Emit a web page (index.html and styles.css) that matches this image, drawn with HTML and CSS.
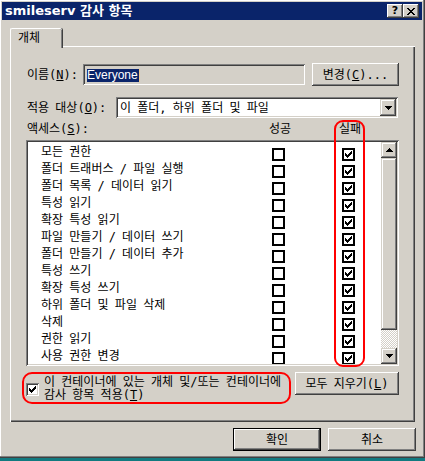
FILE: index.html
```html
<!DOCTYPE html>
<html lang="ko">
<head>
<meta charset="utf-8">
<title>smileserv 감사 항목</title>
<link rel="stylesheet" href="styles.css">
</head>
<body>
<svg class="defs" width="0" height="0" aria-hidden="true">
  <symbol id="chk" viewBox="0 0 7 7"><path d="M6 0h1v1h-1z M5 1h2v1h-2z M0 2h1v1h-1z M4 2h3v1h-3z M0 3h2v1h-2z M3 3h3v1h-3z M0 4h5v1h-5z M1 5h3v1h-3z M2 6h1v1h-1z" fill="#000"/></symbol>
</svg>
<div class="window">
  <div class="titlebar">
    <span class="title">smileserv 감사 항목</span>
    <div class="tbtns">
      <span class="tbtn tq">?</span>
      <span class="tbtn"><svg width="8" height="7" viewBox="0 0 8 7" shape-rendering="crispEdges"><path d="M0 0h2v1h-2z M6 0h2v1h-2z M1 1h2v1h-2z M5 1h2v1h-2z M2 2h4v1h-4z M3 3h2v1h-2z M2 4h4v1h-4z M1 5h2v1h-2z M5 5h2v1h-2z M0 6h2v1h-2z M6 6h2v1h-2z" fill="#000"/></svg></span>
    </div>
  </div>
  <div class="body">
    <div class="tabs"><div class="tab">개체</div></div>
    <div class="panel">
      <div class="row r-name">
        <span class="lbl w-name">이름(<u>N</u>):</span>
        <div class="field"><span class="sel">Everyone</span><span class="caret"></span></div>
        <button class="btn btn-change">변경(<u>C</u>)...</button>
      </div>
      <div class="row r-apply">
        <span class="lbl w-apply">적용 대상(<u>O</u>):</span>
        <div class="combo">
          <span class="combo-text">이 폴더, 하위 폴더 및 파일</span>
          <span class="combo-btn"><svg width="7" height="4" viewBox="0 0 7 4" shape-rendering="crispEdges"><path d="M0 0h7v1h-7z M1 1h5v1h-5z M2 2h3v1h-3z M3 3h1v1h-1z" fill="#000"/></svg></span>
        </div>
      </div>
      <div class="hdr">
        <span>액세스(<u>S</u>):</span><span>성공</span><span>실패</span>
      </div>
      <div class="list">
        <div class="rows">
          <div class="lrow"><span class="name">모든 권한</span><span class="lcb"></span><span class="lcb fail"><svg><use href="#chk"/></svg></span></div>
          <div class="lrow"><span class="name">폴더 트래버스 / 파일 실행</span><span class="lcb"></span><span class="lcb fail"><svg><use href="#chk"/></svg></span></div>
          <div class="lrow"><span class="name">폴더 목록 / 데이터 읽기</span><span class="lcb"></span><span class="lcb fail"><svg><use href="#chk"/></svg></span></div>
          <div class="lrow"><span class="name">특성 읽기</span><span class="lcb"></span><span class="lcb fail"><svg><use href="#chk"/></svg></span></div>
          <div class="lrow"><span class="name">확장 특성 읽기</span><span class="lcb"></span><span class="lcb fail"><svg><use href="#chk"/></svg></span></div>
          <div class="lrow"><span class="name">파일 만들기 / 데이터 쓰기</span><span class="lcb"></span><span class="lcb fail"><svg><use href="#chk"/></svg></span></div>
          <div class="lrow"><span class="name">폴더 만들기 / 데이터 추가</span><span class="lcb"></span><span class="lcb fail"><svg><use href="#chk"/></svg></span></div>
          <div class="lrow"><span class="name">특성 쓰기</span><span class="lcb"></span><span class="lcb fail"><svg><use href="#chk"/></svg></span></div>
          <div class="lrow"><span class="name">확장 특성 쓰기</span><span class="lcb"></span><span class="lcb fail"><svg><use href="#chk"/></svg></span></div>
          <div class="lrow"><span class="name">하위 폴더 및 파일 삭제</span><span class="lcb"></span><span class="lcb fail"><svg><use href="#chk"/></svg></span></div>
          <div class="lrow"><span class="name">삭제</span><span class="lcb"></span><span class="lcb fail"><svg><use href="#chk"/></svg></span></div>
          <div class="lrow"><span class="name">권한 읽기</span><span class="lcb"></span><span class="lcb fail"><svg><use href="#chk"/></svg></span></div>
          <div class="lrow"><span class="name">사용 권한 변경</span><span class="lcb"></span><span class="lcb fail"><svg><use href="#chk"/></svg></span></div>
        </div>
        <div class="vscroll">
          <span class="sbtn"><svg width="7" height="4" viewBox="0 0 7 4" shape-rendering="crispEdges"><path d="M3 0h1v1h-1z M2 1h3v1h-3z M1 2h5v1h-5z M0 3h7v1h-7z" fill="#000"/></svg></span>
          <span class="thumb"></span>
          <span class="track"></span>
          <span class="sbtn"><svg width="7" height="4" viewBox="0 0 7 4" shape-rendering="crispEdges"><path d="M0 0h7v1h-7z M1 1h5v1h-5z M2 2h3v1h-3z M3 3h1v1h-1z" fill="#000"/></svg></span>
        </div>
      </div>
      <div class="bottom">
        <div class="chk-label">
          <span class="cb3d"><svg><use href="#chk"/></svg></span>
          <span class="chk-text"><span class="cl">이 컨테이너에 있는 개체 및/또는 컨테이너에</span><span class="cl">감사 항목 적용(<u>T</u>)</span></span>
        </div>
        <button class="btn btn-clear">모두 지우기(<u>L</u>)</button>
      </div>
      <div class="mark mark-col"></div>
      <div class="mark mark-chk"></div>
    </div>
    <div class="footer">
      <button class="btn btn-foot default">확인</button>
      <button class="btn btn-foot">취소</button>
    </div>
  </div>
</div>
</body>
</html>
```

FILE: styles.css
```css
* { box-sizing: border-box; }
html, body { margin: 0; padding: 0; }
body {
  width: 425px;
  height: 461px;
  overflow: hidden;
  background: #127a80;
  font-family: "DejaVu Sans Mono", "Noto Sans CJK KR", monospace;
  font-size: 12px;
  word-spacing: -1px;
  color: #000;
}
.defs { position: absolute; }
u { text-decoration: underline; text-underline-offset: 1px; }

.window {
  margin: -1px 0 0 -1px;
  width: 426px;
  height: 459px;
  padding: 3px;
  background: #d4d0c8;
  box-shadow: inset -1px -1px #404040, inset 1px 1px #d4d0c8, inset -2px -2px #808080, inset 2px 2px #fff;
}

.titlebar {
  height: 18px;
  background: #0a246a;
  display: flex;
  align-items: center;
  justify-content: space-between;
  padding: 0 3px 0 3px;
}
.title {
  color: #fff;
  font-family: "DejaVu Sans", "Noto Sans CJK KR", sans-serif;
  font-weight: bold;
  font-size: 13px;
  word-spacing: 0;
  line-height: 18px;
}
.tbtns { display: flex; }
.tbtn {
  width: 16px;
  height: 14px;
  background: #d4d0c8;
  box-shadow: inset -1px -1px #404040, inset 1px 1px #fff, inset -2px -2px #808080, inset 2px 2px #d4d0c8;
  display: flex;
  align-items: center;
  justify-content: center;
}
.tq {
  font-family: "DejaVu Sans", sans-serif;
  font-weight: bold;
  font-size: 11px;
  line-height: 14px;
}
.tbtn svg { display: block; }

.body { padding: 8px 7px 0 8px; }

.tabs { display: flex; height: 18px; }
.tab {
  position: relative;
  z-index: 1;
  width: 52px;
  height: 20px;
  padding: 2px 0 0 7px;
  background: #d4d0c8;
  border-top: 1px solid #fff;
  border-left: 1px solid #fff;
  border-top-left-radius: 2px;
  border-top-right-radius: 2px;
  box-shadow: inset -1px 0 #808080, 1px 0 #404040;
  line-height: 14px;
}

.panel {
  position: relative;
  height: 376px;
  border-top: 1px solid #fff;
  border-left: 1px solid #fff;
  box-shadow: inset -1px -1px #404040, inset -2px -2px #808080;
  padding: 16px 16px 0 15px;
}

.row { display: flex; align-items: center; }
.r-name { height: 23px; }
.r-apply { height: 21px; margin-top: 11px; }
.lbl { padding-left: 1px; white-space: nowrap; line-height: 14px; }
.w-name { width: 57px; }
.w-apply { width: 90px; }

.field {
  width: 222px;
  height: 21px;
  margin-right: 7px;
  background: #d4d0c8;
  box-shadow: inset 1px 1px #808080, inset -1px -1px #fff, inset 2px 2px #404040, inset -2px -2px #d4d0c8;
  padding: 5px 0 0 4px;
  display: flex;
  align-items: flex-start;
}
.sel {
  background: #0a246a;
  color: #fff;
  font-family: "Liberation Sans", sans-serif;
  font-size: 12px;
  word-spacing: 0;
  line-height: 13px;
  padding: 0 1px 0 0;
}
.caret { width: 1px; height: 13px; background: #f0c890; }

.btn {
  font-family: "DejaVu Sans Mono", "Noto Sans CJK KR", monospace;
  font-size: 12px;
  word-spacing: -1px;
  color: #000;
  border: 0;
  margin: 0;
  padding: 0;
  background: #d4d0c8;
  box-shadow: inset -1px -1px #404040, inset 1px 1px #fff, inset -2px -2px #808080, inset 2px 2px #d4d0c8;
  line-height: 14px;
}
.btn-change { width: 87px; height: 23px; }

.combo {
  width: 282px;
  height: 21px;
  background: #fff;
  box-shadow: inset 1px 1px #808080, inset -1px -1px #fff, inset 2px 2px #404040, inset -2px -2px #d4d0c8;
  display: flex;
  align-items: center;
  justify-content: space-between;
  padding: 2px;
}
.combo-text { padding-left: 2px; line-height: 14px; white-space: nowrap; }
.combo-btn {
  width: 16px;
  height: 17px;
  background: #d4d0c8;
  box-shadow: inset -1px -1px #404040, inset 1px 1px #d4d0c8, inset -2px -2px #808080, inset 2px 2px #fff;
  display: flex;
  align-items: center;
  justify-content: center;
}

.hdr {
  height: 22px;
  display: grid;
  grid-template-columns: 242px 70px auto;
  align-items: center;
  line-height: 14px;
  padding-left: 1px;
}

.list {
  height: 226px;
  background: #fff;
  box-shadow: inset 1px 1px #808080, inset -1px -1px #fff, inset 2px 2px #404040, inset -2px -2px #d4d0c8;
  padding: 2px;
  display: flex;
  justify-content: space-between;
}
.rows { padding-top: 3px; overflow: hidden; height: 222px; flex: 1; }
.lrow {
  height: 17px;
  display: flex;
  align-items: flex-start;
  padding-left: 13px;
}
.name { width: 231px; line-height: 17px; white-space: nowrap; margin-top: -1px; }
.lcb {
  flex: none;
  margin-top: 3px;
  width: 13px;
  height: 13px;
  border: 2px solid #000;
  background: #fff;
  display: flex;
  align-items: center;
  justify-content: center;
}
.lcb.fail { margin-left: 57px; }
.lcb svg, .cb3d svg { width: 7px; height: 7px; display: block; shape-rendering: crispEdges; }

.vscroll { width: 16px; flex: none; display: flex; flex-direction: column; }
.sbtn {
  height: 16px;
  flex: none;
  background: #d4d0c8;
  box-shadow: inset -1px -1px #404040, inset 1px 1px #d4d0c8, inset -2px -2px #808080, inset 2px 2px #fff;
  display: flex;
  align-items: center;
  justify-content: center;
}
.thumb {
  height: 172px;
  flex: none;
  background: #d4d0c8;
  box-shadow: inset -1px -1px #404040, inset 1px 1px #d4d0c8, inset -2px -2px #808080, inset 2px 2px #fff;
}
.track {
  height: 18px;
  flex: none;
  background: repeating-conic-gradient(#fff 0 25%, #d4d0c8 0 50%) 0 0 / 2px 2px;
}

.bottom {
  margin-top: 6px;
  height: 32px;
  display: flex;
  justify-content: space-between;
  align-items: flex-start;
}
.chk-label { display: flex; align-items: center; height: 32px; }
.cb3d {
  flex: none;
  width: 13px;
  height: 13px;
  background: #fff;
  box-shadow: inset 1px 1px #808080, inset -1px -1px #fff, inset 2px 2px #404040, inset -2px -2px #d4d0c8;
  display: flex;
  align-items: center;
  justify-content: center;
  margin-right: 5px;
  margin-top: 3px;
}
.chk-text { display: flex; flex-direction: column; padding-top: 2px; }
.cl { display: block; height: 13px; line-height: 13px; white-space: nowrap; }
.btn-clear { flex: none; width: 104px; height: 23px; }

.mark {
  position: absolute;
  border: 2px solid #ff0000;
  pointer-events: none;
}
.mark-col { left: 323px; top: 73px; width: 31px; height: 247px; border-radius: 9px; }
.mark-chk { left: 11px; top: 325px; width: 269px; height: 32px; border-radius: 10px; }

.footer {
  display: flex;
  justify-content: flex-end;
  gap: 7px;
  margin-top: 6px;
  margin-right: -1px;
}
.btn-foot { width: 88px; height: 23px; }
.default {
  box-shadow: inset 0 0 0 1px #000, inset -2px -2px #404040, inset 2px 2px #fff, inset -3px -3px #808080;
}
```
